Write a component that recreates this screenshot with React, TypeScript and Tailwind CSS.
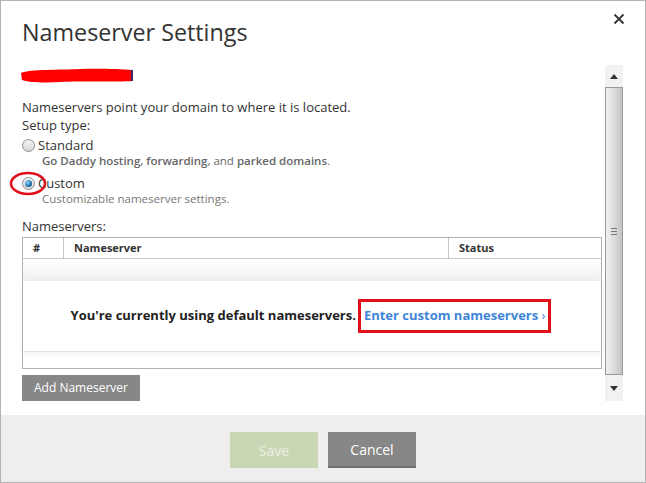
import React from "react";

const font = { fontFamily: '"Open Sans", "Noto Sans", sans-serif' };

function Radio({ checked }: { checked?: boolean }) {
  return (
    <span className="inline-flex items-center justify-center w-[13px] h-[13px] rounded-full border border-[#8f8f8f] bg-gradient-to-b from-[#f4f4f4] to-[#d8d8d8] mr-[3px]">
      {checked && (
        <span className="w-[7px] h-[7px] rounded-full bg-[radial-gradient(circle_at_35%_35%,#8fd6ff,#1c6fa8_60%,#0d3d63)]" />
      )}
    </span>
  );
}

export default function App() {
  return (
    <div
      className="w-[646px] h-[483px] bg-white border border-[#b4b4b4] flex flex-col relative overflow-hidden text-[#333]"
      style={font}
    >
      {/* Header */}
      <div className="h-[63px] pl-[21px] pt-[15px] shrink-0">
        <h1 className="text-[23.3px] leading-[32px] text-[#333]">Nameserver Settings</h1>
      </div>
      <button className="absolute top-[12px] right-[20px] text-[#333]">
        <svg width="12" height="12" viewBox="0 0 12 12">
          <path d="M1.5 1.5 L10.5 10.5 M10.5 1.5 L1.5 10.5" stroke="#333" strokeWidth="1.8" />
        </svg>
      </button>

      {/* Body */}
      <div className="flex flex-1 min-h-0 pl-[21px]">
        <div className="w-[580px] relative">
          {/* redacted */}
          <svg className="mt-[3px] ml-[-2px]" width="118" height="16" viewBox="0 0 118 16">
            <path d="M1 6 C10 2, 40 3, 60 2 C80 1.5, 100 2, 112 3 L113 14 C95 15, 60 14, 40 15 C25 16, 8 15.5, 2 13 Z" fill="#ff0000" />
            <rect x="111" y="3" width="2" height="11" fill="#3a2a6a" />
          </svg>
          <p className="text-[13px] leading-[18px] mt-[15px]">Nameservers point your domain to where it is located.</p>
          <p className="text-[13px] leading-[18px]">Setup type:</p>
          <div className="flex items-center text-[13px] leading-[20px] mt-[1px]">
            <Radio />
            <span>Standard</span>
          </div>
          <p className="text-[11.5px] leading-[14px] text-[#666] pl-[20px] mt-[-1px]">
            <b className="font-semibold">Go Daddy hosting</b>, <b className="font-semibold">forwarding</b>, and{" "}
            <b className="font-semibold">parked domains</b>.
          </p>
          <div className="flex items-center text-[13px] leading-[20px] mt-[5px]">
            <Radio checked />
            <span>Custom</span>
          </div>
          <p className="text-[11.5px] leading-[14px] text-[#777] pl-[20px] mt-[-1px]">Customizable nameserver settings.</p>
          <p className="text-[13px] leading-[18px] mt-[11px]">Nameservers:</p>

          {/* Table */}
          <div className="border border-[#b3b3b3] mt-[2px] h-[132px] flex flex-col">
            <div className="flex h-[21px] border-b border-[#c8c8c8] text-[11px] font-bold text-[#333] items-center shrink-0">
              <div className="w-[40px] pl-[10px] h-full flex items-center">#</div>
              <div className="w-[385px] border-l border-[#c8c8c8] pl-[10px] h-full flex items-center">Nameserver</div>
              <div className="flex-1 border-l border-[#c8c8c8] pl-[10px] h-full flex items-center">Status</div>
            </div>
            <div className="h-[21px] bg-gradient-to-b from-white to-[#f1f1f1] shrink-0" />
            <div className="h-[71px] bg-white border-t border-[#ececec] shadow-[0_2px_6px_rgba(0,0,0,0.08)] flex items-center justify-center text-[13px] font-bold shrink-0 relative z-10">
              <span className="text-[#222]">You're currently using default nameservers.</span>
              <span className="ml-[4px] text-[#3d85d8] px-[3px] py-[4px] border-[3px] border-[#e0101a] relative left-[-2px]">
                Enter custom nameservers <span className="font-normal">›</span>
              </span>
            </div>
            <div className="flex-1 bg-white border-t border-[#ececec]" />
          </div>

          <button className="mt-[6px] w-[118px] h-[26px] bg-[#878787] text-white text-[12px]">Add Nameserver</button>

          {/* red ellipse around radio */}
          <svg className="absolute left-[-13px] top-[107px]" width="40" height="26" viewBox="0 0 40 26">
            <ellipse cx="19" cy="12.5" rx="17" ry="10.5" fill="none" stroke="#e0101a" strokeWidth="2.5" />
          </svg>
        </div>

        {/* Scrollbar */}
        <div className="ml-[3px] w-[18px] h-[336px] mt-[1px] flex flex-col bg-[#f2f2f2]">
          <div className="h-[22px] flex items-center justify-center">
            <svg width="8" height="5" viewBox="0 0 8 5"><path d="M0 5 L4 0 L8 5 Z" fill="#333" /></svg>
          </div>
          <div className="flex-1 border border-[#9a9a9a] bg-gradient-to-r from-[#f0f0f0] via-[#dcdcdc] to-[#c4c4c4] flex items-center justify-center">
            <div className="flex flex-col gap-[2px]">
              <div className="w-[6px] h-px bg-[#777]" />
              <div className="w-[6px] h-px bg-[#777]" />
              <div className="w-[6px] h-px bg-[#777]" />
            </div>
          </div>
          <div className="h-[26px] flex items-center justify-center">
            <svg width="8" height="5" viewBox="0 0 8 5"><path d="M0 0 L8 0 L4 5 Z" fill="#333" /></svg>
          </div>
        </div>
      </div>

      {/* Footer */}
      <div className="h-[67px] bg-[#eeeeee] shrink-0 flex items-start justify-center gap-[10px] pt-[17px]">
        <button className="w-[88px] h-[36px] bg-[#c9d7b5] text-[#e9efe1] text-[14px]">Save</button>
        <button className="w-[88px] h-[36px] bg-[#878787] border-b-[2px] border-[#6e6e6e] text-white text-[14px]">Cancel</button>
      </div>
    </div>
  );
}
